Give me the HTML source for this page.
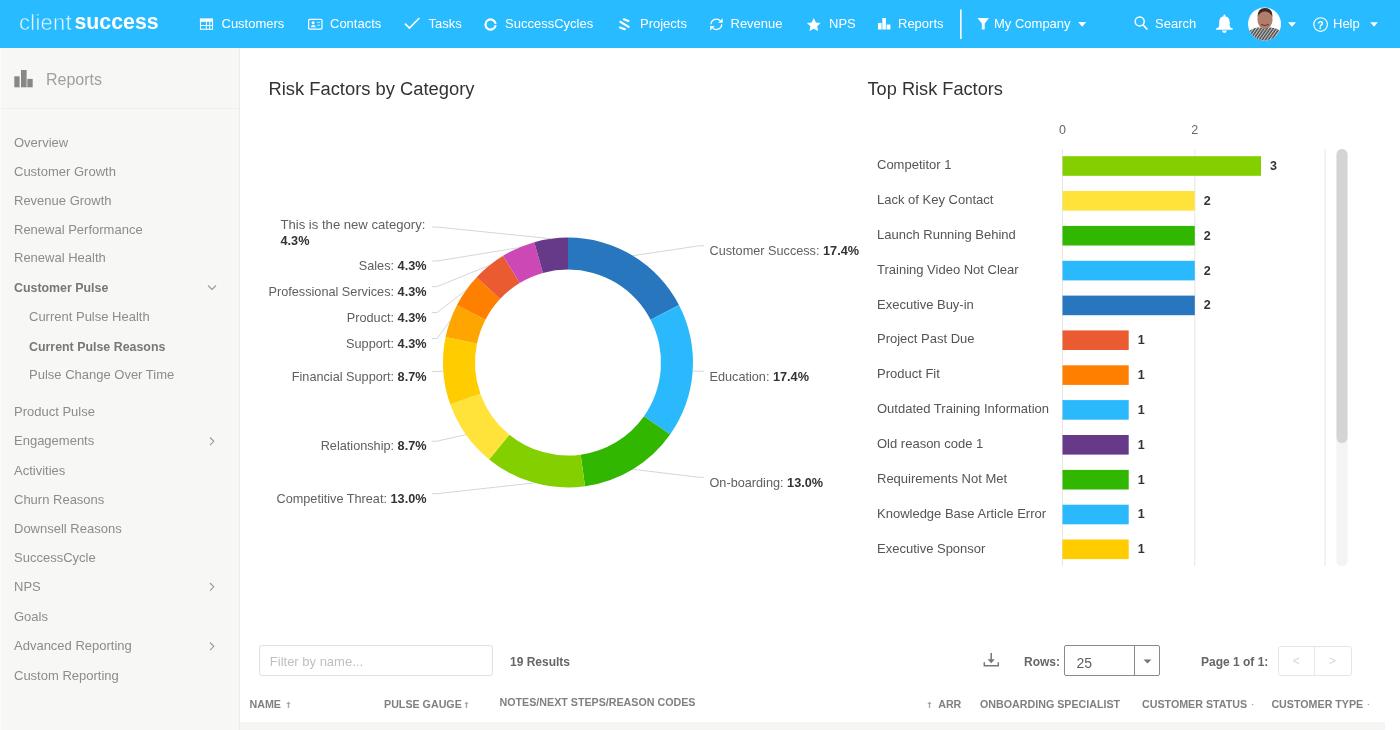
<!DOCTYPE html>
<html><head><meta charset="utf-8"><style>
html,body{margin:0;padding:0;width:1400px;height:730px;overflow:hidden;background:#fff}
body{position:relative;font-family:"Liberation Sans", sans-serif}
.t{position:absolute;white-space:nowrap;font-family:"Liberation Sans", sans-serif}
#root{position:absolute;left:0;top:0;width:1400px;height:730px;will-change:transform}
b{font-weight:bold}
</style></head><body><div id="root">
<div style="position:absolute;left:0;top:0;width:1400px;height:48px;background:#29BBFF"></div><div class="t" style="left:19.00px;top:9.72px;font-size:22px;line-height:25.30px;color:rgba(255,255,255,0.9);letter-spacing:0.25px;-webkit-text-stroke:0.55px #29BBFF;">client</div>
<div class="t" style="left:74.50px;top:10.37px;font-size:21.3px;line-height:24.49px;color:#fff;font-weight:bold;">success</div>
<div class="t" style="left:221.50px;top:17.32px;font-size:13px;line-height:14.95px;color:#fff;">Customers</div>
<div class="t" style="left:330.00px;top:17.32px;font-size:13px;line-height:14.95px;color:#fff;">Contacts</div>
<div class="t" style="left:428.50px;top:17.32px;font-size:13px;line-height:14.95px;color:#fff;">Tasks</div>
<div class="t" style="left:505.00px;top:17.32px;font-size:13px;line-height:14.95px;color:#fff;">SuccessCycles</div>
<div class="t" style="left:640.00px;top:17.32px;font-size:13px;line-height:14.95px;color:#fff;">Projects</div>
<div class="t" style="left:730.50px;top:17.32px;font-size:13px;line-height:14.95px;color:#fff;">Revenue</div>
<div class="t" style="left:829.00px;top:17.32px;font-size:13px;line-height:14.95px;color:#fff;">NPS</div>
<div class="t" style="left:898.00px;top:17.32px;font-size:13px;line-height:14.95px;color:#fff;">Reports</div>
<div class="t" style="left:994.00px;top:17.32px;font-size:13px;line-height:14.95px;color:#fff;">My Company</div>
<div class="t" style="left:1155.00px;top:17.32px;font-size:13px;line-height:14.95px;color:#fff;">Search</div>
<div class="t" style="left:1333.00px;top:17.32px;font-size:13px;line-height:14.95px;color:#fff;">Help</div>

<svg style="position:absolute;left:0;top:0" width="1400" height="48" viewBox="0 0 1400 48">
 <g fill="#fff" stroke="none">
  <!-- customers table -->
  <rect x="199.9" y="18.4" width="13.2" height="3.4"/>
  <path d="M200.5 21 V29.3 H212.5 V21" fill="none" stroke="#fff" stroke-width="1.1"/>
  <path d="M200 25.5 H213 M206.4 21.5 V29.5 M209.7 21.5 V29.5" fill="none" stroke="#fff" stroke-width="0.95"/>
  <!-- contacts card -->
  <rect x="308.6" y="19.3" width="13.4" height="9.8" rx="1" fill="none" stroke="#fff" stroke-width="1.2"/>
  <circle cx="313.1" cy="22.8" r="1.5"/>
  <path d="M310.9 27.3 Q311.1 25.1 313.3 25.1 Q315.5 25.1 315.8 27.3 z"/>
  <rect x="317.1" y="22.1" width="2.8" height="0.8" opacity=".8"/><rect x="317.1" y="24.8" width="2.8" height="0.9" opacity=".8"/>
  <!-- tasks check -->
  <path d="M405 23.6 l4.4 4.4 l10 -10" fill="none" stroke="#fff" stroke-width="1.6"/>
  <!-- successcycles ring -->
  <path d="M495.65 25.1 A5.1 5.1 0 1 1 495.65 23.9" fill="none" stroke="#fff" stroke-width="2.2"/>
  <!-- projects -->
  <path d="M623.8 19.3 L628.4 20.9 M620.4 21.9 L628.7 26.8 M619.9 27.5 L624.9 29.2" fill="none" stroke="#fff" stroke-width="2.1" stroke-linecap="round"/>
  <!-- revenue -->
  <path d="M711.1 24.3 A5.3 5.3 0 0 1 720.6 21.2 M721.7 24.3 A5.3 5.3 0 0 1 712.2 27.4" fill="none" stroke="#fff" stroke-width="1.3"/>
  <path d="M722.7 18.3 V22.8 H718.2 z M710.1 30.4 V25.9 H714.6 z"/>
  <!-- star -->
  <path d="M813.8 18 l2.1 4.4 4.8 .6 -3.5 3.3 .9 4.8 -4.3 -2.4 -4.3 2.4 .9 -4.8 -3.5 -3.3 4.8 -.6 z"/>
  <!-- reports bars -->
  <rect x="878" y="23" width="3.6" height="6.5"/><rect x="882.3" y="18" width="3.6" height="11.5"/><rect x="886.6" y="24.5" width="3.8" height="5"/>
  <!-- divider -->
  <rect x="960" y="9.5" width="1.6" height="29.5"/>
  <!-- filter -->
  <path d="M977.5 18 h11.5 l-4.3 5.5 v6 h-2.9 v-6 z"/>
  <!-- carets -->
  <path d="M1078.2 22 h8 l-4 4.8 z M1288 22.2 h8 l-4 4.6 z M1370.2 22.3 h7.6 l-3.8 4.4 z"/>
  <!-- search -->
  <circle cx="1139.7" cy="21.4" r="4.5" fill="none" stroke="#fff" stroke-width="1.5"/>
  <path d="M1143.2 25 L1146.9 29" stroke="#fff" stroke-width="1.7" stroke-linecap="round"/>
  <!-- bell -->
  <path d="M1224.4 16.2 C1220.3 16.2 1219.2 19.6 1219.2 22.5 V25.5 C1219.2 27.2 1217.8 28 1216.1 28.6 V29.7 H1232.8 V28.6 C1231.1 28 1229.7 27.2 1229.7 25.5 V22.5 C1229.7 19.6 1228.6 16.2 1224.4 16.2 z"/>
  <rect x="1223.5" y="14.4" width="1.8" height="2.6" rx=".9"/>
  <path d="M1222 30.6 h4.8 a2.4 2.4 0 0 1 -4.8 0z"/>
  <!-- help -->
  <circle cx="1320.6" cy="24.5" r="6.8" fill="none" stroke="#fff" stroke-width="1.15"/>
 </g>
 <text x="1320.5" y="28.6" font-family="Liberation Sans" font-size="10.5" font-weight="bold" fill="#fff" text-anchor="middle">?</text>
 <!-- avatar -->
 <defs><clipPath id="av"><circle cx="1264.5" cy="24" r="16.5"/></clipPath>
  <pattern id="shirt" width="2.5" height="2.5" patternUnits="userSpaceOnUse" patternTransform="rotate(35)"><rect width="2.5" height="2.5" fill="#4a4a4a"/><rect width="1.1" height="2.5" fill="#c8c8c8"/></pattern></defs>
 <g clip-path="url(#av)">
  <rect x="1248" y="7" width="34" height="34" fill="#fff"/>
  <path d="M1246 42 L1247 33 Q1252 28 1258 27.5 L1271 27.5 Q1278 28 1282 33 L1283 42 z" fill="url(#shirt)"/>
  <ellipse cx="1265" cy="19.5" rx="7.6" ry="9.6" fill="#b27d6c"/>
  <path d="M1257.5 17 Q1257.5 8 1265 8 Q1272.5 8 1272.5 17 Q1270 11.5 1265 11.5 Q1260 11.5 1257.5 17z" fill="#3b2c26"/>
  <path d="M1261 24.5 q4 2 8 0" stroke="#5a3028" stroke-width="0.9" fill="none"/>
 </g>
</svg>
<div style="position:absolute;left:0;top:48px;width:239px;height:682px;background:#F7F7F5;border-right:1px solid #EBEBEB"></div><div style="position:absolute;left:0;top:108px;width:239px;height:1px;background:#EFEFEF"></div><div style="position:absolute;left:0;top:48px;width:1px;height:682px;background:#FBFBFA"></div><svg style="position:absolute;left:0;top:48px" width="40" height="50"><g fill="#888">
<rect x="14.3" y="28.3" width="5.3" height="11"/><rect x="21" y="22" width="5.6" height="17.3"/><rect x="27.3" y="30.9" width="5.4" height="8.4"/></g></svg><div class="t" style="left:46.00px;top:70.85px;font-size:16px;line-height:18.40px;color:#A0A0A0;">Reports</div>
<div class="t" style="left:14.00px;top:136.02px;font-size:13px;line-height:14.95px;color:#8C8C8C;">Overview</div>
<div class="t" style="left:14.00px;top:165.42px;font-size:13px;line-height:14.95px;color:#8C8C8C;">Customer Growth</div>
<div class="t" style="left:14.00px;top:193.92px;font-size:13px;line-height:14.95px;color:#8C8C8C;">Revenue Growth</div>
<div class="t" style="left:14.00px;top:222.52px;font-size:13px;line-height:14.95px;color:#8C8C8C;">Renewal Performance</div>
<div class="t" style="left:14.00px;top:251.02px;font-size:13px;line-height:14.95px;color:#8C8C8C;">Renewal Health</div>
<div class="t" style="left:14.00px;top:281.17px;font-size:12.4px;line-height:14.26px;color:#777;font-weight:bold;">Customer Pulse</div>
<div class="t" style="left:29.00px;top:310.42px;font-size:13px;line-height:14.95px;color:#8C8C8C;">Current Pulse Health</div>
<div class="t" style="left:29.00px;top:339.67px;font-size:12.4px;line-height:14.26px;color:#777;font-weight:bold;">Current Pulse Reasons</div>
<div class="t" style="left:29.00px;top:367.92px;font-size:13px;line-height:14.95px;color:#8C8C8C;">Pulse Change Over Time</div>
<div class="t" style="left:14.00px;top:404.52px;font-size:13px;line-height:14.95px;color:#8C8C8C;">Product Pulse</div>
<div class="t" style="left:14.00px;top:434.02px;font-size:13px;line-height:14.95px;color:#8C8C8C;">Engagements</div>
<div class="t" style="left:14.00px;top:464.02px;font-size:13px;line-height:14.95px;color:#8C8C8C;">Activities</div>
<div class="t" style="left:14.00px;top:492.92px;font-size:13px;line-height:14.95px;color:#8C8C8C;">Churn Reasons</div>
<div class="t" style="left:14.00px;top:521.52px;font-size:13px;line-height:14.95px;color:#8C8C8C;">Downsell Reasons</div>
<div class="t" style="left:14.00px;top:550.62px;font-size:13px;line-height:14.95px;color:#8C8C8C;">SuccessCycle</div>
<div class="t" style="left:14.00px;top:579.72px;font-size:13px;line-height:14.95px;color:#8C8C8C;">NPS</div>
<div class="t" style="left:14.00px;top:610.02px;font-size:13px;line-height:14.95px;color:#8C8C8C;">Goals</div>
<div class="t" style="left:14.00px;top:639.22px;font-size:13px;line-height:14.95px;color:#8C8C8C;">Advanced Reporting</div>
<div class="t" style="left:14.00px;top:669.02px;font-size:13px;line-height:14.95px;color:#8C8C8C;">Custom Reporting</div>
<svg style="position:absolute;left:0;top:0" width="240" height="730"><g fill="none" stroke="#999" stroke-width="1.1"><path d="M208 285.5 l4 4 l4 -4"/><path d="M210 437.5 l3.8 3.8 l-3.8 3.8"/><path d="M210 583.0 l3.8 3.8 l-3.8 3.8"/><path d="M210 642.5 l3.8 3.8 l-3.8 3.8"/></g></svg><div style="position:absolute;left:240px;top:48px;width:1160px;height:682px;background:#FFFFFF"></div><div class="t" style="left:268.50px;top:78.29px;font-size:18.35px;line-height:21.10px;color:#333;">Risk Factors by Category</div>
<div class="t" style="left:867.50px;top:78.93px;font-size:18.2px;line-height:20.93px;color:#333;">Top Risk Factors</div>
<svg style="position:absolute;left:0;top:0" width="1400" height="730"><path d="M568.00 237.50 A125 125 0 0 1 678.99 304.99 L650.57 319.71 A93 93 0 0 0 568.00 269.50Z" fill="#2876BD"/><path d="M678.99 304.99 A125 125 0 0 1 670.12 434.59 L643.98 416.13 A93 93 0 0 0 650.57 319.71Z" fill="#2AB9FC"/><path d="M670.12 434.59 A125 125 0 0 1 585.02 486.34 L580.66 454.63 A93 93 0 0 0 643.98 416.13Z" fill="#31B700"/><path d="M585.02 486.34 A125 125 0 0 1 489.11 459.46 L509.31 434.64 A93 93 0 0 0 580.66 454.63Z" fill="#84CF00"/><path d="M489.11 459.46 A125 125 0 0 1 450.22 404.36 L480.37 393.64 A93 93 0 0 0 509.31 434.64Z" fill="#FFE33B"/><path d="M450.22 404.36 A125 125 0 0 1 445.61 337.07 L476.95 343.58 A93 93 0 0 0 480.37 393.64Z" fill="#FFCC00"/><path d="M445.61 337.07 A125 125 0 0 1 457.01 304.99 L485.43 319.71 A93 93 0 0 0 476.95 343.58Z" fill="#FFA500"/><path d="M457.01 304.99 A125 125 0 0 1 476.65 277.18 L500.03 299.02 A93 93 0 0 0 485.43 319.71Z" fill="#FF7F00"/><path d="M476.65 277.18 A125 125 0 0 1 503.05 255.70 L519.68 283.04 A93 93 0 0 0 500.03 299.02Z" fill="#EB5B32"/><path d="M503.05 255.70 A125 125 0 0 1 534.28 242.14 L542.91 272.95 A93 93 0 0 0 519.68 283.04Z" fill="#CC48B5"/><path d="M534.28 242.14 A125 125 0 0 1 568.00 237.50 L568.00 269.50 A93 93 0 0 0 542.91 272.95Z" fill="#673A89"/><path d="M704 245.8 L699 245.8 L632.9 255.7" fill="none" stroke="#D6D6D6" stroke-width="1"/><path d="M704 371.2 L699 371.2 L692.7 371.0" fill="none" stroke="#D6D6D6" stroke-width="1"/><path d="M704 477.3 L699 477.3 L632.9 469.3" fill="none" stroke="#D6D6D6" stroke-width="1"/><path d="M432 493.7 L437 493.7 L534.3 482.9" fill="none" stroke="#D6D6D6" stroke-width="1"/><path d="M432 441.2 L437 441.2 L465.9 434.6" fill="none" stroke="#D6D6D6" stroke-width="1"/><path d="M432 371.6 L437 371.6 L443.3 371.0" fill="none" stroke="#D6D6D6" stroke-width="1"/><path d="M432 338.6 L437 338.6 L450.2 320.6" fill="none" stroke="#D6D6D6" stroke-width="1"/><path d="M432 312.6 L437 312.6 L465.9 290.4" fill="none" stroke="#D6D6D6" stroke-width="1"/><path d="M432 286.6 L437 286.6 L489.1 265.5" fill="none" stroke="#D6D6D6" stroke-width="1"/><path d="M432 261.0 L437 261.0 L518.2 247.8" fill="none" stroke="#D6D6D6" stroke-width="1"/><path d="M432 227.0 L437 227.0 L551.0 238.7" fill="none" stroke="#D6D6D6" stroke-width="1"/></svg><div class="t" style="left:709.50px;top:244.19px;font-size:12.7px;line-height:14.60px;color:#606060;">Customer Success: <b style="color:#333">17.4%</b></div>
<div class="t" style="left:709.50px;top:369.59px;font-size:12.7px;line-height:14.60px;color:#606060;">Education: <b style="color:#333">17.4%</b></div>
<div class="t" style="left:709.50px;top:475.59px;font-size:12.7px;line-height:14.60px;color:#606060;">On-boarding: <b style="color:#333">13.0%</b></div>
<div class="t" style="right:973.50px;top:491.59px;font-size:12.7px;line-height:14.60px;color:#606060;">Competitive Threat: <b style="color:#333">13.0%</b></div>
<div class="t" style="right:973.50px;top:438.59px;font-size:12.7px;line-height:14.60px;color:#606060;">Relationship: <b style="color:#333">8.7%</b></div>
<div class="t" style="right:973.50px;top:369.59px;font-size:12.7px;line-height:14.60px;color:#606060;">Financial Support: <b style="color:#333">8.7%</b></div>
<div class="t" style="right:973.50px;top:336.59px;font-size:12.7px;line-height:14.60px;color:#606060;">Support: <b style="color:#333">4.3%</b></div>
<div class="t" style="right:973.50px;top:310.59px;font-size:12.7px;line-height:14.60px;color:#606060;">Product: <b style="color:#333">4.3%</b></div>
<div class="t" style="right:973.50px;top:284.59px;font-size:12.7px;line-height:14.60px;color:#606060;">Professional Services: <b style="color:#333">4.3%</b></div>
<div class="t" style="right:973.50px;top:258.59px;font-size:12.7px;line-height:14.60px;color:#606060;">Sales: <b style="color:#333">4.3%</b></div>
<div class="t" style="left:280.50px;top:216.73px;font-size:13.1px;line-height:15.06px;color:#606060;">This is the new category:</div>
<div class="t" style="left:280.50px;top:233.79px;font-size:12.7px;line-height:14.60px;color:#606060;"><b style="color:#333">4.3%</b></div>
<div style="position:absolute;left:240px;top:280px;width:29.3px;height:24px;background:#fff"></div><svg style="position:absolute;left:0;top:0" width="1400" height="730"><rect x="1062.0" y="149" width="1" height="417" fill="#E6E6E6"/><rect x="1194.3" y="149" width="1" height="417" fill="#E6E6E6"/><rect x="1324.6" y="149" width="1" height="417" fill="#E6E6E6"/><rect x="1336.5" y="149" width="11" height="417" rx="5.5" fill="#F4F4F4"/><rect x="1336.5" y="149" width="11" height="294" rx="5.5" fill="#D4D4D4"/><rect x="1062.5" y="156.2" width="198.5" height="19.6" fill="#84CF00"/><rect x="1062.5" y="191.0" width="132.3" height="19.6" fill="#FFE33B"/><rect x="1062.5" y="225.9" width="132.3" height="19.6" fill="#31B700"/><rect x="1062.5" y="260.8" width="132.3" height="19.6" fill="#2AB9FC"/><rect x="1062.5" y="295.6" width="132.3" height="19.6" fill="#2876BD"/><rect x="1062.5" y="330.4" width="66.2" height="19.6" fill="#EB5B32"/><rect x="1062.5" y="365.3" width="66.2" height="19.6" fill="#FF7F00"/><rect x="1062.5" y="400.1" width="66.2" height="19.6" fill="#2AB9FC"/><rect x="1062.5" y="435.0" width="66.2" height="19.6" fill="#673A89"/><rect x="1062.5" y="469.9" width="66.2" height="19.6" fill="#31B700"/><rect x="1062.5" y="504.7" width="66.2" height="19.6" fill="#2AB9FC"/><rect x="1062.5" y="539.5" width="66.2" height="19.6" fill="#FFCC00"/></svg><div class="t" style="left:762.50px;width:600px;text-align:center;top:123.38px;font-size:12.5px;line-height:14.37px;color:#666;">0</div>
<div class="t" style="left:894.80px;width:600px;text-align:center;top:123.38px;font-size:12.5px;line-height:14.37px;color:#666;">2</div>
<div class="t" style="left:877.00px;top:158.22px;font-size:13px;line-height:14.95px;color:#555;">Competitor 1</div>
<div class="t" style="left:1269.95px;top:158.98px;font-size:12.5px;line-height:14.37px;color:#333;font-weight:bold;">3</div>
<div class="t" style="left:877.00px;top:193.07px;font-size:13px;line-height:14.95px;color:#555;">Lack of Key Contact</div>
<div class="t" style="left:1203.80px;top:193.83px;font-size:12.5px;line-height:14.37px;color:#333;font-weight:bold;">2</div>
<div class="t" style="left:877.00px;top:227.92px;font-size:13px;line-height:14.95px;color:#555;">Launch Running Behind</div>
<div class="t" style="left:1203.80px;top:228.68px;font-size:12.5px;line-height:14.37px;color:#333;font-weight:bold;">2</div>
<div class="t" style="left:877.00px;top:262.77px;font-size:13px;line-height:14.95px;color:#555;">Training Video Not Clear</div>
<div class="t" style="left:1203.80px;top:263.53px;font-size:12.5px;line-height:14.37px;color:#333;font-weight:bold;">2</div>
<div class="t" style="left:877.00px;top:297.62px;font-size:13px;line-height:14.95px;color:#555;">Executive Buy-in</div>
<div class="t" style="left:1203.80px;top:298.38px;font-size:12.5px;line-height:14.37px;color:#333;font-weight:bold;">2</div>
<div class="t" style="left:877.00px;top:332.47px;font-size:13px;line-height:14.95px;color:#555;">Project Past Due</div>
<div class="t" style="left:1137.65px;top:333.23px;font-size:12.5px;line-height:14.37px;color:#333;font-weight:bold;">1</div>
<div class="t" style="left:877.00px;top:367.32px;font-size:13px;line-height:14.95px;color:#555;">Product Fit</div>
<div class="t" style="left:1137.65px;top:368.08px;font-size:12.5px;line-height:14.37px;color:#333;font-weight:bold;">1</div>
<div class="t" style="left:877.00px;top:402.17px;font-size:13px;line-height:14.95px;color:#555;">Outdated Training Information</div>
<div class="t" style="left:1137.65px;top:402.93px;font-size:12.5px;line-height:14.37px;color:#333;font-weight:bold;">1</div>
<div class="t" style="left:877.00px;top:437.02px;font-size:13px;line-height:14.95px;color:#555;">Old reason code 1</div>
<div class="t" style="left:1137.65px;top:437.78px;font-size:12.5px;line-height:14.37px;color:#333;font-weight:bold;">1</div>
<div class="t" style="left:877.00px;top:471.87px;font-size:13px;line-height:14.95px;color:#555;">Requirements Not Met</div>
<div class="t" style="left:1137.65px;top:472.63px;font-size:12.5px;line-height:14.37px;color:#333;font-weight:bold;">1</div>
<div class="t" style="left:877.00px;top:506.72px;font-size:13px;line-height:14.95px;color:#555;">Knowledge Base Article Error</div>
<div class="t" style="left:1137.65px;top:507.48px;font-size:12.5px;line-height:14.37px;color:#333;font-weight:bold;">1</div>
<div class="t" style="left:877.00px;top:541.57px;font-size:13px;line-height:14.95px;color:#555;">Executive Sponsor</div>
<div class="t" style="left:1137.65px;top:542.33px;font-size:12.5px;line-height:14.37px;color:#333;font-weight:bold;">1</div>
<div style="position:absolute;left:258.8px;top:645.2px;width:232.5px;height:28.8px;border:1px solid #E0E0E0;border-radius:3px;background:#fff"></div><div class="t" style="left:269.80px;top:654.82px;font-size:13px;line-height:14.95px;color:#C0C0C0;">Filter by name...</div>
<div class="t" style="left:510.00px;top:655.74px;font-size:12px;line-height:13.80px;color:#666;font-weight:bold;">19 Results</div>
<svg style="position:absolute;left:0;top:0" width="1400" height="730"><g fill="none" stroke="#777" stroke-width="1.3">
<path d="M991.2 653 v7 M984.3 662.3 v3.4 h14 v-3.4" stroke-width="1.5"/></g><path d="M987.6 659.2 h7.2 l-3.6 4z" fill="#777"/></svg><div class="t" style="left:1024.00px;top:656.24px;font-size:12px;line-height:13.80px;color:#666;font-weight:bold;">Rows:</div>
<div style="position:absolute;left:1064px;top:645px;width:93.5px;height:29px;border:1px solid #8A8A8A;border-radius:2px;background:#fff"></div><div style="position:absolute;left:1133.8px;top:646px;width:1px;height:29px;background:#8A8A8A"></div><svg style="position:absolute;left:1142.5px;top:658.5px" width="10" height="6"><path d="M0.5 0.5 h8 l-4 4z" fill="#777"/></svg><div class="t" style="left:1076.50px;top:654.70px;font-size:14px;line-height:16.10px;color:#5F5F5F;">25</div>
<div class="t" style="left:1201.00px;top:656.24px;font-size:12px;line-height:13.80px;color:#666;font-weight:bold;">Page 1 of 1:</div>
<div style="position:absolute;left:1277.7px;top:645.5px;width:72px;height:28.5px;border:1px solid #E6E6E6;border-radius:3px;background:#fff"></div><div style="position:absolute;left:1314.3px;top:646px;width:1px;height:29px;background:#E6E6E6"></div><div class="t" style="left:996.30px;width:600px;text-align:center;top:654.94px;font-size:12px;line-height:13.80px;color:#D5D5D5;">&lt;</div>
<div class="t" style="left:1032.50px;width:600px;text-align:center;top:654.94px;font-size:12px;line-height:13.80px;color:#D5D5D5;">&gt;</div>
<div class="t" style="left:249.50px;top:698.04px;font-size:10.7px;line-height:12.30px;color:#808080;font-weight:bold;">NAME</div>
<div class="t" style="left:384.00px;top:698.04px;font-size:10.7px;line-height:12.30px;color:#808080;font-weight:bold;">PULSE GAUGE</div>
<div class="t" style="left:499.50px;top:696.04px;font-size:10.7px;line-height:12.30px;color:#808080;font-weight:bold;">NOTES/NEXT STEPS/REASON CODES</div>
<div class="t" style="left:938.20px;top:698.34px;font-size:10.7px;line-height:12.30px;color:#808080;font-weight:bold;">ARR</div>
<div class="t" style="left:980.00px;top:698.34px;font-size:10.7px;line-height:12.30px;color:#808080;font-weight:bold;">ONBOARDING SPECIALIST</div>
<div class="t" style="left:1142.00px;top:698.34px;font-size:10.7px;line-height:12.30px;color:#808080;font-weight:bold;">CUSTOMER STATUS</div>
<div class="t" style="left:1271.40px;top:698.34px;font-size:10.7px;line-height:12.30px;color:#808080;font-weight:bold;">CUSTOMER TYPE</div>
<svg style="position:absolute;left:0;top:0" width="1400" height="730"><g fill="#AAA">
<path d="M288.5 701.5 l2.2 2.6 h-1.5 v4 h-1.4 v-4 h-1.5z"/>
<path d="M466.5 701.5 l2.2 2.6 h-1.5 v4 h-1.4 v-4 h-1.5z"/>
<path d="M929.5 701.5 l2.2 2.6 h-1.5 v4 h-1.4 v-4 h-1.5z"/>
<circle cx="1252.5" cy="704.5" r="0.8"/><circle cx="1368.5" cy="704.5" r="0.8"/>
</g></svg><div style="position:absolute;left:240px;top:722px;width:1145px;height:8px;background:#F5F5F4"></div>
</div></body></html>
